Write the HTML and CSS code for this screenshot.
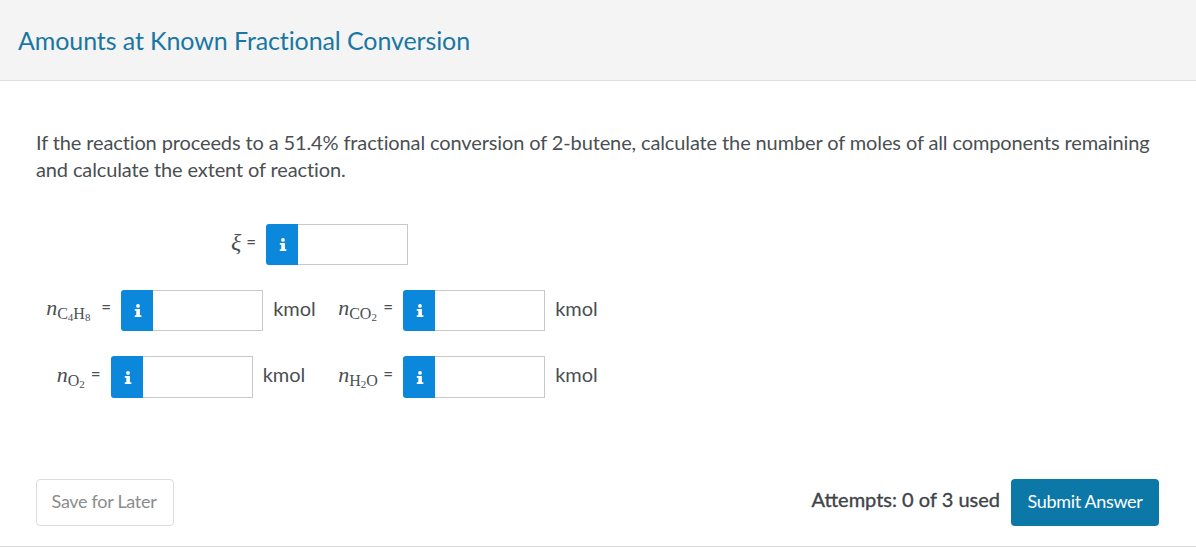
FILE: index.html
```html
<!DOCTYPE html>
<html lang="en">
<head>
<meta charset="utf-8">
<title>Amounts at Known Fractional Conversion</title>
<link rel="stylesheet" href="styles.css">
</head>
<body>
<svg class="defs" width="0" height="0" aria-hidden="true"><defs>
<symbol id="info" viewBox="0 0 8 13"><path d="M4 0a1.9 1.9 0 1 1 0 3.8a1.9 1.9 0 1 1 0-3.8zM.8 5h5.1v6.3H7.4V13H.8v-1.7h1.5V6.7H.8z"/></symbol>
</defs></svg>
<header class="head"><h1 class="title">Amounts at Known Fractional Conversion</h1></header>
<main class="content">
<p class="prompt">If the reaction proceeds to a 51.4% fractional conversion of 2-butene, calculate the number of moles of all components remaining and calculate the extent of reaction.</p>
<div class="answers">
<div class="answer wide">
<span class="math w-xi"><i class="xi">ξ</i><span class="eq">=</span></span>
<div class="field"><span class="tag"><svg class="i"><use href="#info"/></svg></span><input class="box" type="text" aria-label="extent of reaction"></div>
</div>
<div class="answer">
<span class="math w-c4h8"><span><i>n</i><sub>C<sub class="sub2">4</sub>H<sub class="sub2">8</sub></sub></span><span class="eq">=</span></span>
<div class="field"><span class="tag"><svg class="i"><use href="#info"/></svg></span><input class="box" type="text" aria-label="C4H8"></div>
<span class="unit">kmol</span>
</div>
<div class="answer">
<span class="math w-65"><span><i>n</i><sub>CO<sub class="sub2">2</sub></sub></span><span class="eq">=</span></span>
<div class="field"><span class="tag"><svg class="i"><use href="#info"/></svg></span><input class="box" type="text" aria-label="CO2"></div>
<span class="unit">kmol</span>
</div>
<div class="answer">
<span class="math w-o2"><span><i>n</i><sub>O<sub class="sub2">2</sub></sub></span><span class="eq">=</span></span>
<div class="field tall"><span class="tag"><svg class="i"><use href="#info"/></svg></span><input class="box" type="text" aria-label="O2"></div>
<span class="unit">kmol</span>
</div>
<div class="answer">
<span class="math w-65"><span><i>n</i><sub>H<sub class="sub2">2</sub>O</sub></span><span class="eq">=</span></span>
<div class="field tall"><span class="tag"><svg class="i"><use href="#info"/></svg></span><input class="box" type="text" aria-label="H2O"></div>
<span class="unit">kmol</span>
</div>
</div>
<div class="actions">
<button class="btn save" type="button">Save for Later</button>
<span class="attempts">Attempts: 0 of 3 used</span>
<button class="btn submit" type="button">Submit Answer</button>
</div>
</main>
</body>
</html>
```

FILE: styles.css
```css
* { box-sizing: border-box; }
html, body { margin: 0; background: #fff; }
body { font-family: Lato, "Open Sans", sans-serif; color: #4a4f52; height: 548px; overflow: hidden; }
.defs { position: absolute; }
.head { height: 81px; background: #f4f4f4; border-bottom: 1px solid #dedede; display: flex; align-items: center; padding-left: 18px; }
.title { margin: 0; font-size: 25px; font-weight: 400; letter-spacing: -0.1px; color: #1a77a3; line-height: 30px; }
.content { height: 466px; padding: 48px 36px 0; border-bottom: 1px solid #d9d9d9; }
.prompt { margin: 0; font-size: 20px; letter-spacing: -0.12px; line-height: 27px; color: #4a4f52; }
.answers { display: grid; grid-template-columns: 270px 260px; column-gap: 22px; row-gap: 25px; width: fit-content; margin: 41px 0 0 10px; }
.answer { display: flex; align-items: center; justify-content: center; font-size: 20px; }
.answer.wide { grid-column: 1 / span 2; padding-right: 5px; }
.math { display: flex; align-items: baseline; justify-content: space-between; font-family: "Liberation Serif", serif; font-size: 22px; line-height: 26px; color: #4a4f52; white-space: nowrap; padding: 0 10px 4px 0; }
.w-xi { width: 35px; }
.w-c4h8 { width: 75px; }
.w-o2 { width: 54px; }
.w-65 { width: 65px; }
.math sub { font-size: 16px; line-height: 0; vertical-align: -4px; }
.math sub.sub2 { font-size: 11px; vertical-align: -2px; }
.eq { font-family: Lato, sans-serif; font-size: 17px; position: relative; top: -2px; }
.xi { font-size: 24px; }
.field { display: flex; width: 142px; height: 41px; }
.field.tall { height: 42px; }
.tag { width: 32px; flex: none; background: #0b87dc; border-radius: 3px 0 0 3px; display: flex; align-items: center; justify-content: center; padding-left: 2px; }
.i { width: 8px; height: 13px; fill: #fff; }
.box { flex: 1; min-width: 0; border: 1px solid #c9c9c9; border-left: 0; background: #fff; padding: 0; }
.unit { margin-left: 10px; color: #4a4f52; padding-bottom: 6px; }
.actions { display: flex; align-items: center; margin-top: 81px; padding-right: 1px; }
.btn { height: 47px; border-radius: 4px; font-family: Lato, sans-serif; font-size: 18px; padding: 0 0 4px; }
.save { width: 138px; background: #fff; border: 1px solid #dcdcdc; color: #8c8c8c; letter-spacing: -0.3px; padding-right: 2px; }
.attempts { margin-left: auto; font-size: 20px; -webkit-text-stroke: 0.35px #3f4447; color: #3f4447; padding-bottom: 7px; }
.submit { width: 148px; margin-left: 11px; background: #0b78a8; border: 0; color: #fff; letter-spacing: -0.34px; }
```
